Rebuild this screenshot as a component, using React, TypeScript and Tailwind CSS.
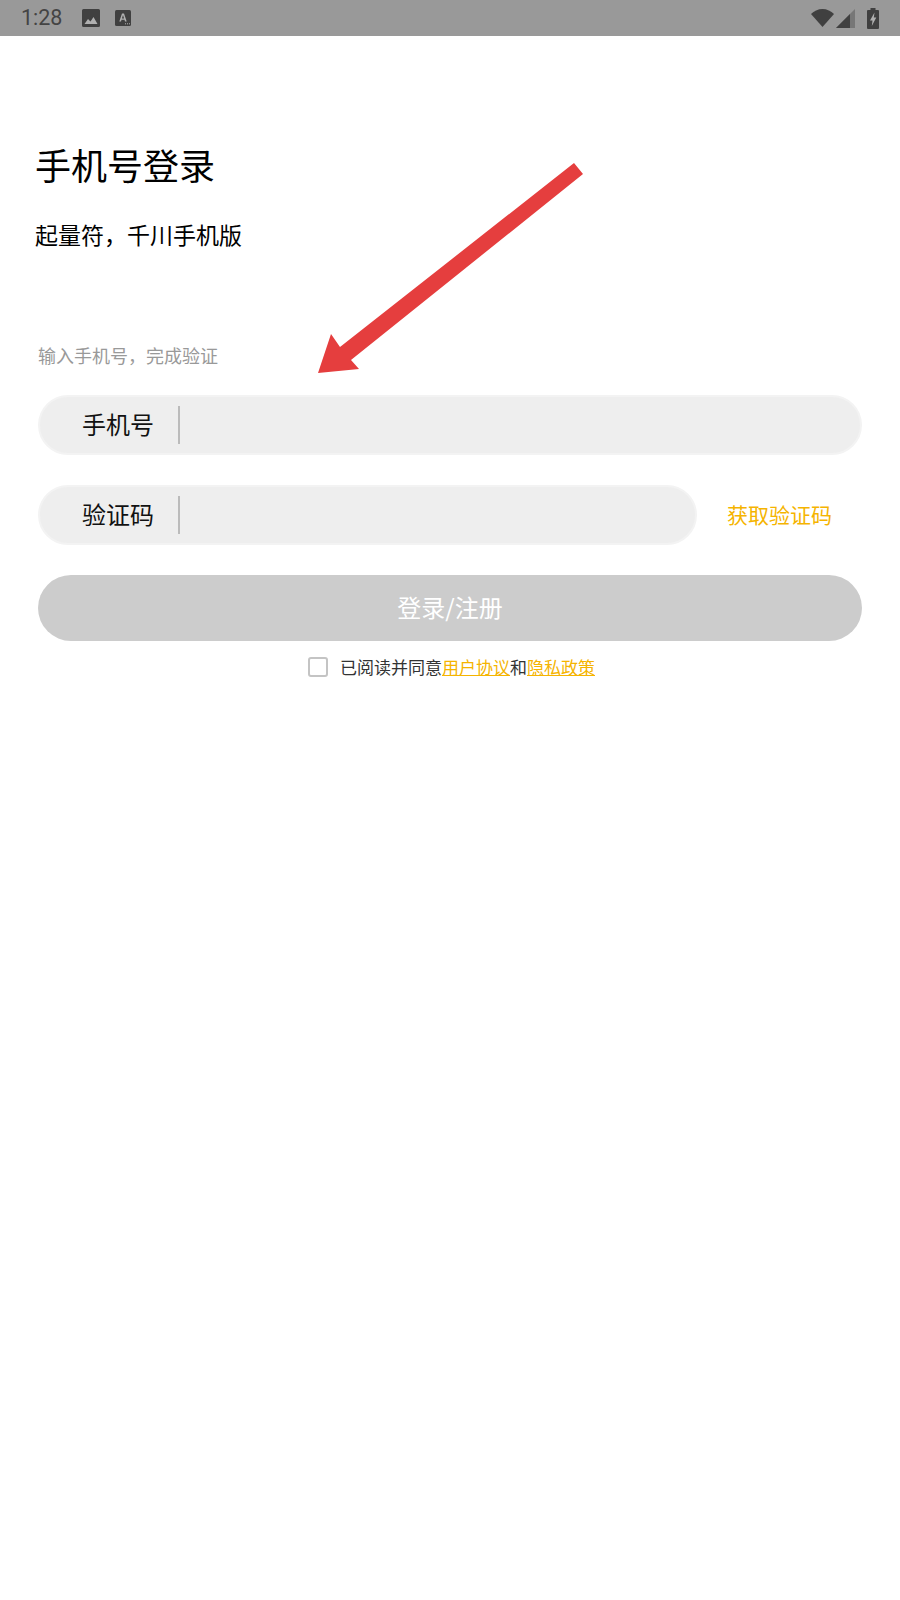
// Phone login screen with a red annotation arrow over it

function StatusBar() {
  return (
    <div className="flex h-[36px] items-center bg-[#999999] pl-[21px] pr-[21px] text-[#444444]">
      <span className="w-[61px] font-['Roboto',sans-serif] text-[21.500px] leading-[36px]">1:28</span>
      <svg className="h-[18px] w-[18px]" viewBox="0 0 18 18" fill="#404040">
        <path d="M1.500 0h15A1.500 1.500 0 0 1 18 1.500v15a1.500 1.500 0 0 1-1.500 1.500h-15A1.500 1.500 0 0 1 0 16.500v-15A1.500 1.500 0 0 1 1.500 0z" />
        <path d="M2.500 15l3.500-5 2.500 2.500 3-4.500 4 7z" fill="#b0b0b0" />
      </svg>
      <svg className="ml-[15px] h-[16px] w-[16px]" viewBox="0 0 16 16">
        <rect width="16" height="16" rx="1.500" fill="#404040" />
        <path d="M4.300 11.500L7 3.500h2l2.700 8h-1.700l-.5-1.700H6.500L6 11.500zM6.900 8.500h2.200L8 5z" fill="#b0b0b0" />
        <path d="M10 13.800h1M12 13.800h1M14 13.800h1" stroke="#b0b0b0" strokeWidth="1" />
      </svg>
      <div className="flex-1" />
      <svg className="h-[18px] w-[23px]" viewBox="0 0 23 18" fill="#404040">
        <path d="M0 5C3 2 7 0 11.500 0S20 2 23 5L11.500 18z" />
      </svg>
      <svg className="ml-[2px] h-[19px] w-[19px]" viewBox="0 0 19 19">
        <path d="M0 19L19 0v19z" fill="#777777" />
        <path d="M0 19L14 5v14z" fill="#404040" />
      </svg>
      <svg className="ml-[12px] h-[21px] w-[12px]" viewBox="0 0 12 21" fill="#404040">
        <path d="M3.500 0h5v2H11a1 1 0 0 1 1 1v17a1 1 0 0 1-1 1H1a1 1 0 0 1-1-1V3a1 1 0 0 1 1-1h2.500z" />
        <path d="M7.500 4.500L3 12.500h2.500L4.800 18l4.500-8.500H6.800z" fill="#b0b0b0" />
      </svg>
    </div>
  );
}

function FieldRow({ label }: { label: string }) {
  return (
    <div className="flex h-[60px] items-center rounded-full border-2 border-[#f3f3f3] bg-[#eeeeee] pl-[42px]">
      <span className="-mt-[3px] w-[96px] text-[24px] leading-[36px] text-[#111111]">{label}</span>
      <div className="h-[38px] w-[2px] bg-[#bbbbbb]" />
    </div>
  );
}

export default function App() {
  return (
    <div className="relative h-[1600px] w-[900px] bg-white font-['Noto_Sans_CJK_SC','Noto_Sans',sans-serif]">
      <StatusBar />

      <div className="px-[38px]">
        <h1 className="mt-[102px] -ml-[3px] text-[36px] leading-[52px] font-normal text-black">手机号登录</h1>
        <p className="mt-[26px] -ml-[3px] text-[23px] leading-[36px] text-black">起量符，千川手机版</p>
        <p className="mt-[90px] text-[18px] leading-[26px] text-[#999999]">输入手机号，完成验证</p>

        <div className="mt-[27px]">
          <FieldRow label="手机号" />
        </div>

        <div className="mt-[30px] flex items-center">
          <div className="w-[659px]">
            <FieldRow label="验证码" />
          </div>
          <span className="ml-[30px] -mt-[3px] text-[21px] leading-[30px] text-[#f5b400]">获取验证码</span>
        </div>

        <button className="mt-[30px] h-[66px] w-full rounded-full bg-[#cccccc] pb-[2px] text-[24px] text-white">
          登录/注册
        </button>

        <div className="mt-[13px] flex items-center justify-center pl-[3px]">
          <div className="h-[20px] w-[20px] rounded-[3px] border-2 border-[#c4c4c4]" />
          <p className="ml-[12px] text-[17px] leading-[26px] text-[#333333]">
            已阅读并同意
            <span className="text-[#f5b400] underline">用户协议</span>和
            <span className="text-[#f5b400] underline">隐私政策</span>
          </p>
        </div>
      </div>

      {/* annotation arrow */}
      <svg className="absolute left-[318px] top-[163px] h-[211px] w-[266px]" viewBox="0 0 266 211">
        <path d="M0 210L13 171L22 184L256 0L265 11L33 197L41 206z" fill="#e53e3e" />
      </svg>
    </div>
  );
}
